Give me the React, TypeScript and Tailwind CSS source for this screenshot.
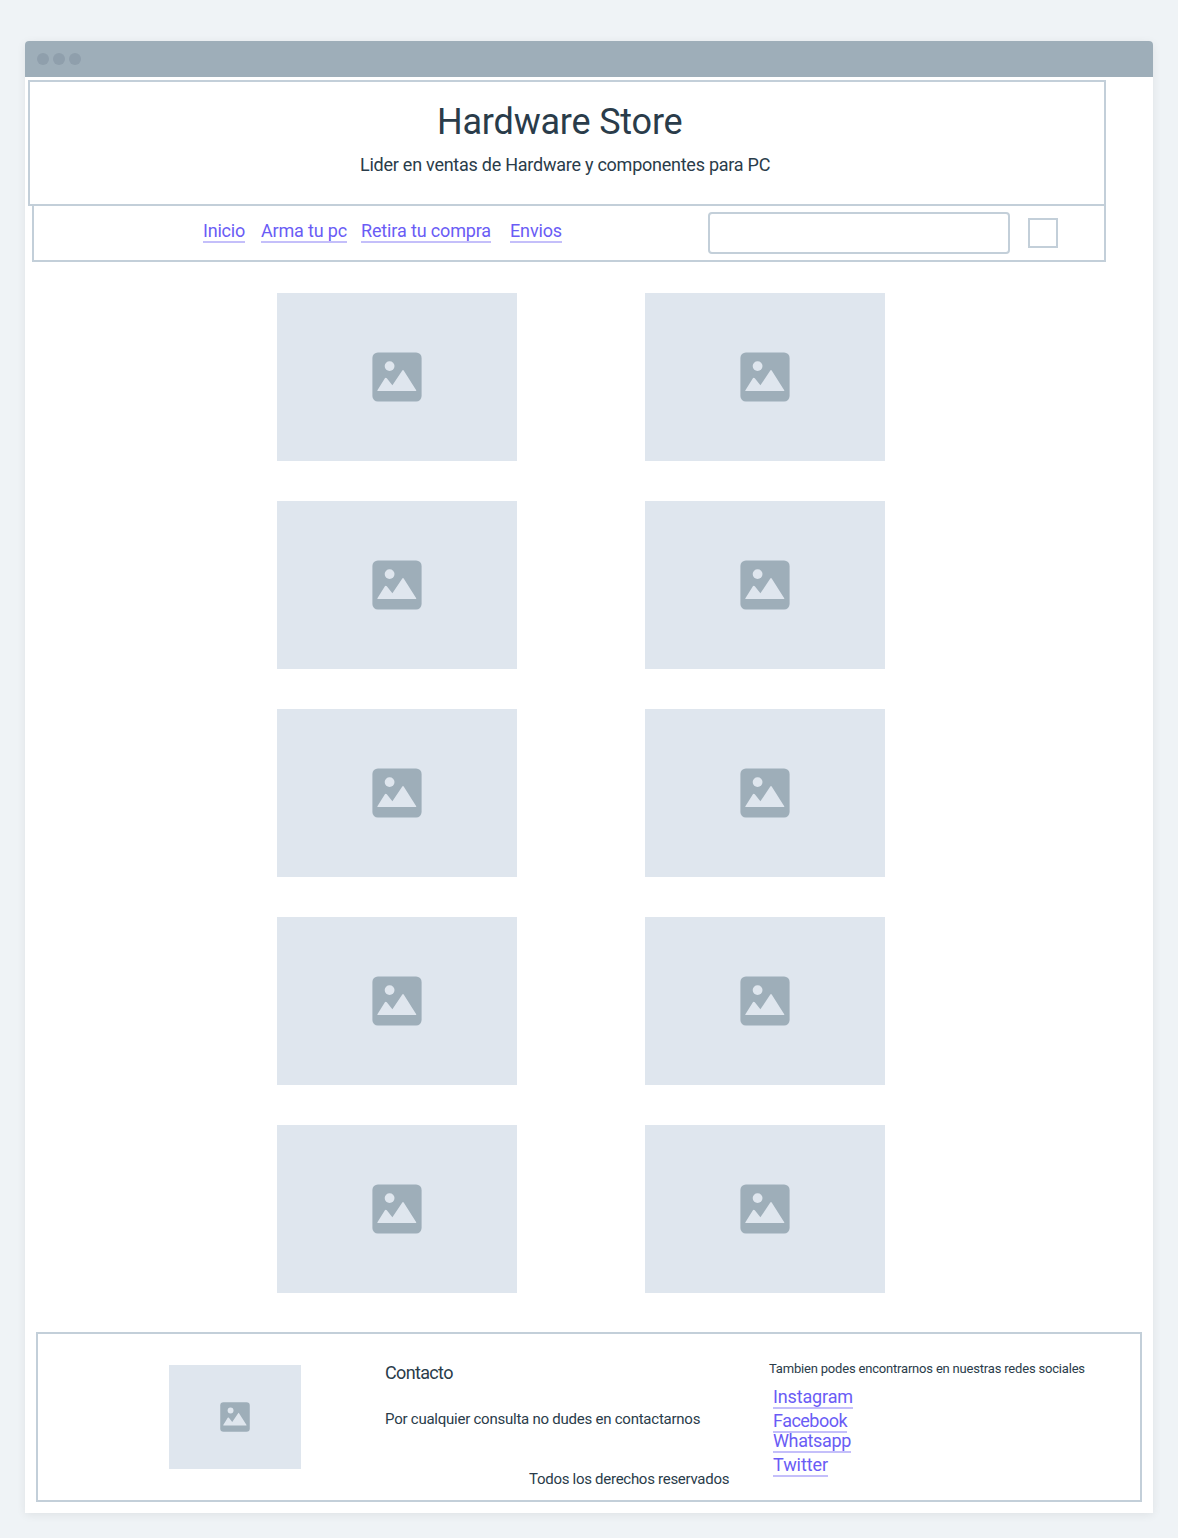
type TileProps = { className: string; iconClassName: string };

function PictureIcon({ className }: { className: string }) {
  return (
    <svg viewBox="0 0 50 50" className={className} aria-hidden="true">
      <rect x="0.4" y="0.4" width="49.2" height="49.2" rx="5.5" fill="#9eaeb9" />
      <circle cx="17.6" cy="14.1" r="4.9" fill="#dfe6ee" />
      <path
        d="M5.8 39 Q5 39 5.4 38.3 L12.9 26.2 Q13.8 25.1 14.8 26.2 L20.4 33.3 L30.3 18.6 Q31 17.6 31.7 18.6 L44.2 38.2 Q44.6 39 43.8 39 Z"
        fill="#dfe6ee"
      />
    </svg>
  );
}

function PictureTile({ className, iconClassName }: TileProps) {
  return (
    <div className={`flex items-center justify-center bg-[#dfe6ee] ${className}`}>
      <PictureIcon className={iconClassName} />
    </div>
  );
}

function TextLink({ label, className }: { label: string; className: string }) {
  return (
    <a
      href="#"
      className={`block h-6 shrink-0 whitespace-nowrap border-b-2 border-[#c4bffa] text-lg leading-6 text-[#6a5cf5] ${className}`}
    >
      {label}
    </a>
  );
}

export default function App() {
  return (
    <div className="h-[1538px] w-[1178px] overflow-hidden bg-[#eff3f6] px-[25px] pt-[41px] font-['Roboto',sans-serif] text-[#2a3c4a]">
      <div className="h-[1472px] rounded-t bg-white shadow-[0_2px_10px_rgba(0,0,0,0.07)]">
        <div className="flex h-9 items-center gap-1 rounded-t bg-[#9eaeb9] pl-3">
          <span className="size-3 rounded-full bg-[#8f9fac]" />
          <span className="size-3 rounded-full bg-[#8f9fac]" />
          <span className="size-3 rounded-full bg-[#8f9fac]" />
        </div>

        <header className="ml-[3px] mt-[3px] h-[126px] w-[1078px] border-2 border-[#c3cfd9] pt-5">
          <h1 className="ml-[407px] whitespace-nowrap text-4xl leading-10 tracking-[-0.2px]">Hardware Store</h1>
          <p className="ml-[330px] mt-[11px] whitespace-nowrap text-lg leading-6 tracking-[-0.25px]">
            Lider en ventas de Hardware y componentes para PC
          </p>
        </header>

        <nav className="-mt-0.5 ml-[7px] flex h-[58px] w-[1074px] items-start border-2 border-[#c3cfd9]">
          <TextLink label="Inicio" className="ml-[169px] mt-[13px] w-[42px] tracking-[-0.21px]" />
          <TextLink label="Arma tu pc" className="ml-4 mt-[13px] w-[86px] tracking-[-0.17px]" />
          <TextLink label="Retira tu compra" className="ml-3.5 mt-[13px] w-[130px] tracking-[-0.145px]" />
          <TextLink label="Envios" className="ml-[19px] mt-[13px] w-[52px] tracking-[-0.14px]" />
          <input
            type="text"
            aria-label="Buscar"
            className="ml-[146px] mt-1.5 h-[42px] w-[302px] shrink-0 rounded border-2 border-[#c3cfd9] bg-white px-2"
          />
          <div className="ml-[18px] mt-3 size-[30px] shrink-0 border-2 border-[#c3cfd9]" />
        </nav>

        <main className="ml-[252px] mt-[31px] grid w-[608px] grid-cols-[240px_240px] gap-x-32 gap-y-10">
          {Array.from({ length: 10 }, (_, i) => (
            <PictureTile key={i} className="h-[168px] w-[240px]" iconClassName="size-[50px]" />
          ))}
        </main>

        <footer className="ml-[11px] mt-[39px] flex h-[170px] w-[1106px] items-start border-2 border-[#c3cfd9]">
          <PictureTile className="ml-[131px] mt-[31px] h-[104px] w-[132px] shrink-0" iconClassName="size-[30px]" />
          <div className="ml-[84px] mt-[27px] w-[384px] shrink-0 whitespace-nowrap">
            <h2 className="text-lg leading-6 tracking-[-0.65px]">Contacto</h2>
            <p className="mt-6 text-[15px] leading-5 tracking-[-0.24px]">Por cualquier consulta no dudes en contactarnos</p>
            <p className="ml-36 mt-10 text-[15px] leading-5 tracking-[-0.28px]">Todos los derechos reservados</p>
          </div>
          <div className="mt-[27px] whitespace-nowrap">
            <p className="text-[13px] leading-4 tracking-[-0.19px]">Tambien podes encontrarnos en nuestras redes sociales</p>
            <div className="ml-1 mt-2">
              <TextLink label="Instagram" className="w-20 tracking-[-0.14px]" />
              <TextLink label="Facebook" className="w-[74px] tracking-[-0.52px]" />
              <TextLink label="Whatsapp" className="-mt-1 w-[78px] tracking-[-0.36px]" />
              <TextLink label="Twitter" className="w-[55px] tracking-[-0.08px]" />
            </div>
          </div>
        </footer>
      </div>
    </div>
  );
}
